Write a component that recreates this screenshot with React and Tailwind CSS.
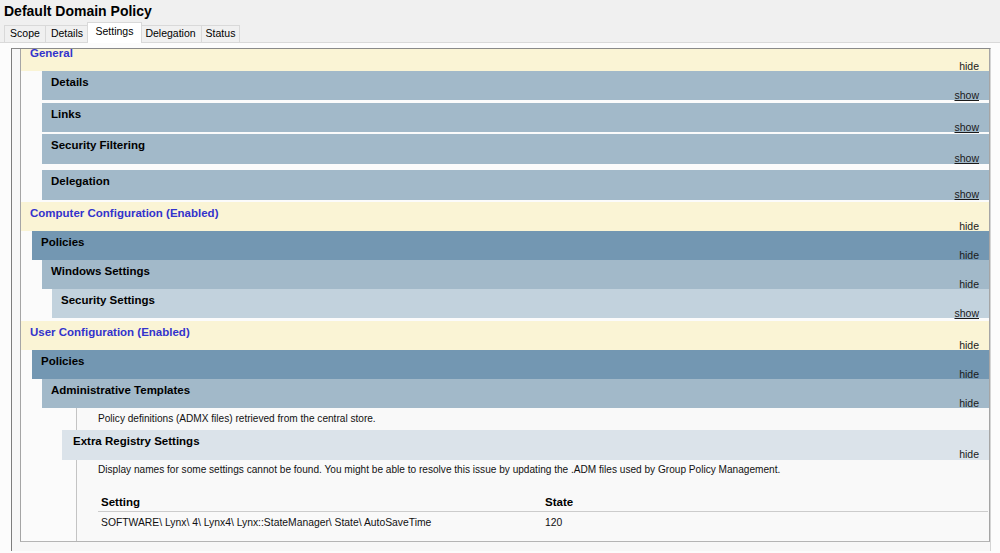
import React from "react";

function Tab({ label, w, selected }) {
  if (selected) {
    return (
      <div
        className={`${w} relative z-10 -mx-[2px] -mb-px h-[21px] border border-b-0 border-[#d9d9d9] bg-white pt-[2px] text-center text-[10.5px] leading-[13px] text-black`}
      >
        {label}
      </div>
    );
  }
  return (
    <div
      className={`${w} h-[17px] border border-b-0 border-l-0 first:border-l border-[#d9d9d9] bg-[#f0f0f0] pt-[1px] text-center text-[10.5px] leading-[13px] text-black`}
    >
      {label}
    </div>
  );
}

// One collapsible heading of the settings report
function Heading({ box, label, action, blue, pad = "pl-[9px]" }) {
  return (
    <div className={`shrink-0 ${box}`}>
      <div
        className={`${pad} pt-[5px] text-[11.5px] font-bold leading-[13px] whitespace-nowrap ${
          blue ? "text-[#3333cc]" : "text-black"
        }`}
      >
        {label}
      </div>
      <div className="pr-[10px] text-right text-[10.5px] leading-[12px] text-[#1a1a1a]">
        <span className={action === "show" ? "underline" : ""}>{action}</span>
      </div>
    </div>
  );
}

export default function App() {
  return (
    <div className="flex h-[553px] w-[1000px] flex-col overflow-hidden bg-[#f0f0f0] font-['Liberation_Sans',Arial,sans-serif]">
      {/* window title */}
      <div className="h-[22px] shrink-0 pl-[4px] pt-[3px] text-[14px] font-bold leading-[16px] text-black">
        Default Domain Policy
      </div>

      {/* tab strip */}
      <div className="flex h-[21px] shrink-0 items-end border-b border-[#d9d9d9] pl-[4px]">
        <Tab label="Scope" w="w-[42px]" />
        <Tab label="Details" w="w-[43px]" />
        <Tab label="Settings" w="w-[55px]" selected />
        <Tab label="Delegation" w="w-[62px]" />
        <Tab label="Status" w="w-[38px]" />
      </div>

      {/* tab page */}
      <div className="flex-1 bg-[#fcfcfc] pl-[11px] pt-[5px]">
        <div className="h-[503px] w-[980px] border-l border-t border-r border-l-[#7d7d7d] border-t-[#8a8a8a] border-r-[#d4d4d4] bg-[#f7f7f7] pl-[8px]">
          {/* report body */}
          <div className="flex h-[493px] w-[970px] flex-col overflow-hidden border-x border-b border-x-[#a5a5a5] border-b-[#b4b4b4] bg-[#fbfbfb]">
            <Heading box="-mt-[7px] h-[29px] bg-[#faf4d5]" label="General" action="hide" blue />
            <Heading box="ml-[21px] h-[29px] bg-[#a2b9c9]" label="Details" action="show" />
            <Heading box="ml-[21px] mt-[3px] h-[29px] bg-[#a2b9c9]" label="Links" action="show" />
            <Heading box="ml-[21px] mt-[2px] h-[30px] bg-[#a2b9c9]" label="Security Filtering" action="show" />
            <Heading box="ml-[21px] mt-[6px] h-[30px] bg-[#a2b9c9]" label="Delegation" action="show" />

            <Heading box="mt-[2px] h-[29px] bg-[#faf4d5]" label="Computer Configuration (Enabled)" action="hide" blue />
            <Heading box="ml-[11px] h-[29px] bg-[#7397b2]" label="Policies" action="hide" />
            <Heading box="ml-[21px] h-[29px] bg-[#a2b9c9]" label="Windows Settings" action="hide" />
            <Heading box="ml-[31px] h-[29px] bg-[#c2d2dd]" label="Security Settings" action="show" />

            <Heading box="mt-[3px] h-[29px] bg-[#faf4d5]" label="User Configuration (Enabled)" action="hide" blue />
            <Heading box="ml-[11px] h-[29px] bg-[#7397b2]" label="Policies" action="hide" />
            <Heading box="ml-[21px] h-[29px] bg-[#a2b9c9]" label="Administrative Templates" action="hide" />

            <div className="ml-[55px] h-[22px] shrink-0 border-l border-[#c4c4c4] bg-[#f9f9f9] pl-[21px] pt-[5px] text-[10.1px] leading-[12px] text-[#111]">
              Policy definitions (ADMX files) retrieved from the central store.
            </div>

            <Heading
              box="ml-[41px] h-[30px] bg-[#dbe3ea]"
              pad="pl-[11px]"
              label="Extra Registry Settings"
              action="hide"
            />

            <div className="ml-[55px] flex-1 border-l border-[#c4c4c4] bg-[#f9f9f9] pl-[21px] pr-[1px] pt-[4px] text-[10.1px] leading-[12px] text-[#111]">
              <div className="whitespace-nowrap">
                Display names for some settings cannot be found. You might be able to resolve this issue by updating the .ADM files used by Group Policy Management.
              </div>
              <table className="mt-[19px] w-full table-fixed border-collapse">
                <colgroup>
                  <col className="w-[444px]" />
                  <col />
                </colgroup>
                <thead>
                  <tr className="border-b border-[#cccccc]">
                    <th className="pb-[2px] pl-[3px] text-left text-[11.5px] font-bold leading-[14px] text-black">Setting</th>
                    <th className="pb-[2px] pl-[3px] text-left text-[11.5px] font-bold leading-[14px] text-black">State</th>
                  </tr>
                </thead>
                <tbody>
                  <tr>
                    <td className="pl-[3px] pt-[5px] text-[10.35px] leading-[12px] whitespace-nowrap">
                      SOFTWARE\ Lynx\ 4\ Lynx4\ Lynx::StateManager\ State\ AutoSaveTime
                    </td>
                    <td className="pl-[3px] pt-[5px] text-[10.35px] leading-[12px]">120</td>
                  </tr>
                </tbody>
              </table>
            </div>
          </div>
        </div>
      </div>
    </div>
  );
}
